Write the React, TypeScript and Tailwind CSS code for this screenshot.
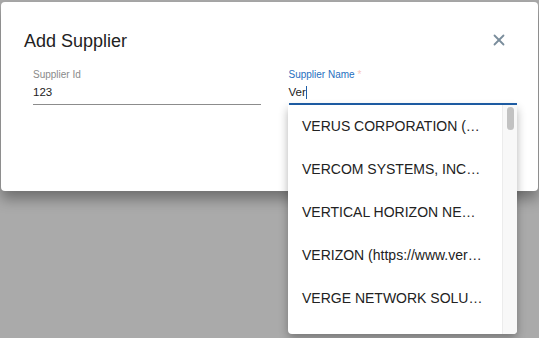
import { X } from "lucide-react";

// shown already shortened, as the list renders them
const SUPPLIERS = [
  "VERUS CORPORATION (…",
  "VERCOM SYSTEMS, INC…",
  "VERTICAL HORIZON NE…",
  "VERIZON (https://www.ver…",
  "VERGE NETWORK SOLU…",
];

export default function App() {
  return (
    <div
      className="relative w-[539px] h-[338px] overflow-hidden bg-[#aaaaaa]"
      style={{ fontFamily: '"Liberation Sans", Arial, sans-serif' }}
    >
      {/* Dialog */}
      <div className="ml-[1px] mt-[2px] w-[537px] h-[189px] bg-white rounded-[4px] shadow-[0_8px_14px_rgba(0,0,0,0.35)]">
        <div className="flex items-start justify-between pl-[23px] pr-[30px] pt-[29px]">
          <h2 className="text-[18px] leading-[20px] text-[#222]">Add Supplier</h2>
          <button className="mt-0 text-[#7a8d9c]">
            <X size={18} strokeWidth={2.4} />
          </button>
        </div>

        <div className="flex gap-[28px] pl-[32px] pr-[21px] pt-[18px]">
          <div className="w-[228px]">
            <label className="block text-[10px] leading-[12px] text-[#8a8a8a]">Supplier Id</label>
            <div className="mt-[5px] pb-[5px] text-[11.5px] leading-[13px] text-[#222] border-b border-[#8c8c8c]">
              123
            </div>
          </div>
          <div className="w-[229px]">
            <label className="block text-[10px] leading-[12px] text-[#1f6fc0]">
              Supplier Name <span className="text-[#f7c6bc]">*</span>
            </label>
            <div className="mt-[5px] pb-[4px] flex items-center text-[11.5px] leading-[13px] text-[#222] border-b-2 border-[#1f5fa8]">
              Ver
              <span className="inline-block w-[1px] h-[13px] bg-[#1f5fa8]" />
            </div>
          </div>
        </div>
      </div>

      {/* Autocomplete dropdown */}
      <div className="absolute left-[288px] top-[105px] w-[229px] h-[229px] flex bg-white rounded-b-[4px] overflow-hidden shadow-[0_4px_10px_rgba(0,0,0,0.3)]">
        <ul className="flex-1 min-w-0">
          {SUPPLIERS.map((s) => (
            <li
              key={s}
              className="h-[43px] flex items-center pl-[14px] text-[14px] text-[#222] whitespace-nowrap"
            >
              {s}
            </li>
          ))}
        </ul>
        <div className="w-[15px] bg-[#f8f8f8] border-l border-[#ececec] flex justify-center pt-[2px]">
          <div className="w-[7px] h-[23px] rounded-full bg-[#c2c2c2]" />
        </div>
      </div>
    </div>
  );
}
